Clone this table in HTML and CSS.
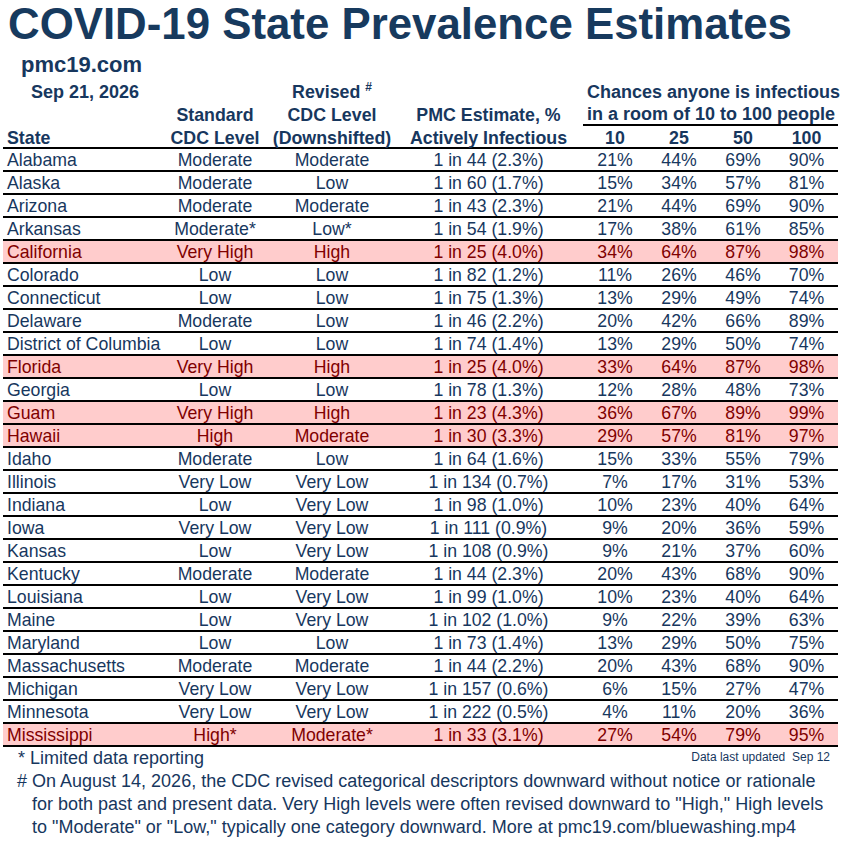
FILE: index.html
```html
<!DOCTYPE html>
<html lang="en">
<head>
    <meta charset="UTF-8">
    <meta name="viewport" content="width=device-width, initial-scale=1.0">
    <title>COVID-19 State Prevalence Estimates</title>
    <link rel="stylesheet" href="styles.css">
</head>
<body>
    <h1 class="title">COVID-19 State Prevalence Estimates</h1>
    <div class="site">pmc19.com</div>

    <table class="prev">
        <colgroup>
            <col class="c-state">
            <col class="c-std">
            <col class="c-rev">
            <col class="c-pmc">
            <col class="c-n">
            <col class="c-n">
            <col class="c-n">
            <col class="c-last">
        </colgroup>
        <thead>
            <tr>
                <th class="date">Sep 21, 2026</th>
                <th></th>
                <th>Revised <sup>#</sup></th>
                <th></th>
                <th colspan="4" class="chances">Chances anyone is infectious</th>
            </tr>
            <tr>
                <th></th>
                <th>Standard</th>
                <th>CDC Level</th>
                <th>PMC Estimate, %</th>
                <th colspan="4" class="chances room">in a room of 10 to 100 people</th>
            </tr>
            <tr class="cols">
                <th class="state">State</th>
                <th>CDC Level</th>
                <th>(Downshifted)</th>
                <th>Actively Infectious</th>
                <th>10</th>
                <th>25</th>
                <th>50</th>
                <th>100</th>
            </tr>
        </thead>
        <tbody id="rows"></tbody>
    </table>

    <div class="notes">
        <div class="limited">
            <span>* Limited data reporting</span>
            <span class="updated">Data last updated&nbsp; Sep 12</span>
        </div>
        <p class="hash"># On August 14, 2026, the CDC revised categorical descriptors downward without notice or rationale<br>for both past and present data. Very High levels were often revised downward to "High," High levels<br>to "Moderate" or "Low," typically one category downward. More at pmc19.com/bluewashing.mp4</p>
    </div>

    <script>
        // state, standard, revised, estimate, 10, 25, 50, 100, highlighted
        const data = [
            ['Alabama', 'Moderate', 'Moderate', '1 in 44 (2.3%)', '21%', '44%', '69%', '90%'],
            ['Alaska', 'Moderate', 'Low', '1 in 60 (1.7%)', '15%', '34%', '57%', '81%'],
            ['Arizona', 'Moderate', 'Moderate', '1 in 43 (2.3%)', '21%', '44%', '69%', '90%'],
            ['Arkansas', 'Moderate*', 'Low*', '1 in 54 (1.9%)', '17%', '38%', '61%', '85%'],
            ['California', 'Very High', 'High', '1 in 25 (4.0%)', '34%', '64%', '87%', '98%', true],
            ['Colorado', 'Low', 'Low', '1 in 82 (1.2%)', '11%', '26%', '46%', '70%'],
            ['Connecticut', 'Low', 'Low', '1 in 75 (1.3%)', '13%', '29%', '49%', '74%'],
            ['Delaware', 'Moderate', 'Low', '1 in 46 (2.2%)', '20%', '42%', '66%', '89%'],
            ['District of Columbia', 'Low', 'Low', '1 in 74 (1.4%)', '13%', '29%', '50%', '74%'],
            ['Florida', 'Very High', 'High', '1 in 25 (4.0%)', '33%', '64%', '87%', '98%', true],
            ['Georgia', 'Low', 'Low', '1 in 78 (1.3%)', '12%', '28%', '48%', '73%'],
            ['Guam', 'Very High', 'High', '1 in 23 (4.3%)', '36%', '67%', '89%', '99%', true],
            ['Hawaii', 'High', 'Moderate', '1 in 30 (3.3%)', '29%', '57%', '81%', '97%', true],
            ['Idaho', 'Moderate', 'Low', '1 in 64 (1.6%)', '15%', '33%', '55%', '79%'],
            ['Illinois', 'Very Low', 'Very Low', '1 in 134 (0.7%)', '7%', '17%', '31%', '53%'],
            ['Indiana', 'Low', 'Very Low', '1 in 98 (1.0%)', '10%', '23%', '40%', '64%'],
            ['Iowa', 'Very Low', 'Very Low', '1 in 111 (0.9%)', '9%', '20%', '36%', '59%'],
            ['Kansas', 'Low', 'Very Low', '1 in 108 (0.9%)', '9%', '21%', '37%', '60%'],
            ['Kentucky', 'Moderate', 'Moderate', '1 in 44 (2.3%)', '20%', '43%', '68%', '90%'],
            ['Louisiana', 'Low', 'Very Low', '1 in 99 (1.0%)', '10%', '23%', '40%', '64%'],
            ['Maine', 'Low', 'Very Low', '1 in 102 (1.0%)', '9%', '22%', '39%', '63%'],
            ['Maryland', 'Low', 'Low', '1 in 73 (1.4%)', '13%', '29%', '50%', '75%'],
            ['Massachusetts', 'Moderate', 'Moderate', '1 in 44 (2.2%)', '20%', '43%', '68%', '90%'],
            ['Michigan', 'Very Low', 'Very Low', '1 in 157 (0.6%)', '6%', '15%', '27%', '47%'],
            ['Minnesota', 'Very Low', 'Very Low', '1 in 222 (0.5%)', '4%', '11%', '20%', '36%'],
            ['Mississippi', 'High*', 'Moderate*', '1 in 33 (3.1%)', '27%', '54%', '79%', '95%', true]
        ];

        const tbody = document.getElementById('rows');
        data.forEach(function(row) {
            const tr = document.createElement('tr');
            if (row[8]) {
                tr.className = 'high';
            }
            for (let i = 0; i < 8; i++) {
                const td = document.createElement('td');
                td.textContent = row[i];
                if (i === 0) {
                    td.className = 'state';
                }
                tr.appendChild(td);
            }
            tbody.appendChild(tr);
        });
    </script>
</body>
</html>
```

FILE: styles.css
```css
body {
    margin: 0;
    font-family: "Liberation Sans", Arial, sans-serif;
    color: #17375e;
    background-color: #fff;
}

.title {
    margin: 0;
    padding-left: 8px;
    font-size: 43.8px;
    line-height: 48px;
    font-weight: bold;
    color: #173a5e;
    white-space: nowrap;
}

.site {
    margin-top: 4px;
    padding-left: 21px;
    font-size: 22px;
    line-height: 26px;
    font-weight: bold;
}

.prev {
    margin: 2px 0 0 3px;
    width: 835px;
    table-layout: fixed;
    border-collapse: separate;
    border-spacing: 0;
    font-size: 17.7px;
}

.c-state { width: 157px; }
.c-std { width: 110px; }
.c-rev { width: 124px; }
.c-pmc { width: 189px; }
.c-n { width: 64px; }
.c-last { width: 63px; }

.prev th {
    padding: 2px 0 0 0;
    font-size: 17.8px;
    line-height: 21px;
    font-weight: bold;
    text-align: center;
    white-space: nowrap;
}

.prev th.date {
    text-align: left;
    padding-left: 28px;
    font-size: 18px;
}

.prev th sup {
    font-size: 12px;
    vertical-align: 7px;
    line-height: 0;
}

.prev th.chances {
    text-align: left;
    padding-left: 4px;
    font-size: 18px;
}

.prev th.room {
    line-height: 19px;
    border-bottom: 2px solid #000;
}

.prev tr.cols th {
    padding-top: 3px;
    line-height: 18px;
    border-bottom: 2px solid #000;
}

.prev th.state,
.prev td.state {
    text-align: left;
    padding-left: 4px;
}

.prev td {
    padding: 1px 0 0 0;
    line-height: 20px;
    text-align: center;
    white-space: nowrap;
    border-bottom: 2px solid #000;
}

.prev tr.high td {
    background-color: #ffcccc;
    color: #800000;
}

.notes {
    font-size: 18px;
    line-height: 23px;
}

.limited {
    display: flex;
    justify-content: space-between;
    align-items: flex-start;
    padding-left: 18px;
    width: 812px;
}

.updated {
    font-size: 12px;
    line-height: 16px;
    padding-top: 2px;
}

.hash {
    margin: 0;
    padding-left: 32px;
    text-indent: -15px;
    white-space: nowrap;
}
```
